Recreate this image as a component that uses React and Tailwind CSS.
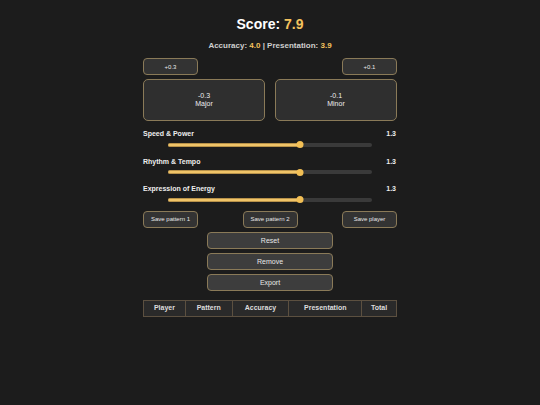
import React, { useState } from 'react';

const sliders = [
  { label: 'Speed & Power', value: 1.3 },
  { label: 'Rhythm & Tempo', value: 1.3 },
  { label: 'Expression of Energy', value: 1.3 },
];

const SmallButton = ({ children }) => (
  <button className="w-[55px] h-[17px] rounded-[4px] border border-[#8a7a58] bg-[#333333] text-[6px] leading-none text-[#e8e8e8]">
    {children}
  </button>
);

const WideButton = ({ children }) => (
  <button className="w-[126px] h-[17px] rounded-[4px] border border-[#8a7a58] bg-[#3d3d3d] text-[7px] leading-none text-[#e8e8e8]">
    {children}
  </button>
);

const Slider = ({ label, value }) => {
  const pct = (value / 2) * 100;
  return (
    <div className="mb-[7px]">
      <div className="flex justify-between text-[7px] font-bold leading-[12px] text-[#eeeeee]">
        <span>{label}</span>
        <span className="pr-[1px]">{value.toFixed(1)}</span>
      </div>
      <div className="relative mx-auto mt-[0.5px] h-[8px] w-[80%]">
        <div className="absolute left-0 right-0 top-[2px] h-[4px] rounded-full bg-[#3a3a3a]" />
        <div
          className="absolute left-0 top-[2px] h-[4px] rounded-full bg-[#f0c468] border-y border-[#b8924a]"
          style={{ width: `${pct}%` }}
        />
        <div
          className="absolute top-[0.5px] h-[7px] w-[7px] -translate-x-1/2 rounded-full bg-[#f2bf55]"
          style={{ left: `${pct}%` }}
        />
      </div>
    </div>
  );
};

const App = () => {
  const [rows] = useState([]);

  return (
    <div className="min-h-screen bg-[#1c1c1c] font-['Liberation_Sans',Arial,sans-serif] text-white">
      <div className="mx-auto w-[254px] pt-[15px]">
        <h1 className="text-center text-[14px] font-bold leading-[18px]">
          Score: <span className="text-[#f4c25e]">7.9</span>
        </h1>
        <p className="mt-[7px] text-center text-[8px] font-bold leading-[12px] text-[#cfcfcf]">
          Accuracy: <span className="text-[#f4c25e]">4.0</span> | Presentation:{' '}
          <span className="text-[#f4c25e]">3.9</span>
        </p>

        {/* deductions */}
        <div className="mt-[6px] flex justify-between">
          <SmallButton>+0.3</SmallButton>
          <SmallButton>+0.1</SmallButton>
        </div>
        <div className="mt-[4px] flex gap-[10px]">
          <button className="flex h-[42px] w-[122px] flex-col items-center justify-center rounded-[5px] border border-[#8a7a58] bg-[#2f2f2f] text-[7px] leading-[8px] text-[#eeeeee]">
            <span>-0.3</span>
            <span>Major</span>
          </button>
          <button className="flex h-[42px] w-[122px] flex-col items-center justify-center rounded-[5px] border border-[#8a7a58] bg-[#2f2f2f] text-[7px] leading-[8px] text-[#eeeeee]">
            <span>-0.1</span>
            <span>Minor</span>
          </button>
        </div>

        {/* sliders */}
        <div className="mt-[7px]">
          {sliders.map((s) => (
            <Slider key={s.label} label={s.label} value={s.value} />
          ))}
        </div>

        <div className="mt-[4px] flex justify-between">
          <SmallButton>Save pattern 1</SmallButton>
          <SmallButton>Save pattern 2</SmallButton>
          <SmallButton>Save player</SmallButton>
        </div>

        <div className="mt-[4px] flex flex-col items-center gap-[4px]">
          <WideButton>Reset</WideButton>
          <WideButton>Remove</WideButton>
          <WideButton>Export</WideButton>
        </div>

        <table className="mt-[9px] w-[254px] border-collapse text-[7px] font-bold text-[#dddddd]">
          <thead>
            <tr className="h-[16px] bg-[#2a2a2a]">
              <th className="w-[42px] border border-[#5c5040] p-0">Player</th>
              <th className="w-[47px] border border-[#5c5040] p-0">Pattern</th>
              <th className="w-[57px] border border-[#5c5040] p-0">Accuracy</th>
              <th className="w-[73px] border border-[#5c5040] p-0">Presentation</th>
              <th className="w-[35px] border border-[#5c5040] p-0">Total</th>
            </tr>
          </thead>
          <tbody>
            {rows.map((r, i) => (
              <tr key={i}>
                <td>{r.player}</td>
              </tr>
            ))}
          </tbody>
        </table>
      </div>
    </div>
  );
};

export default App;
